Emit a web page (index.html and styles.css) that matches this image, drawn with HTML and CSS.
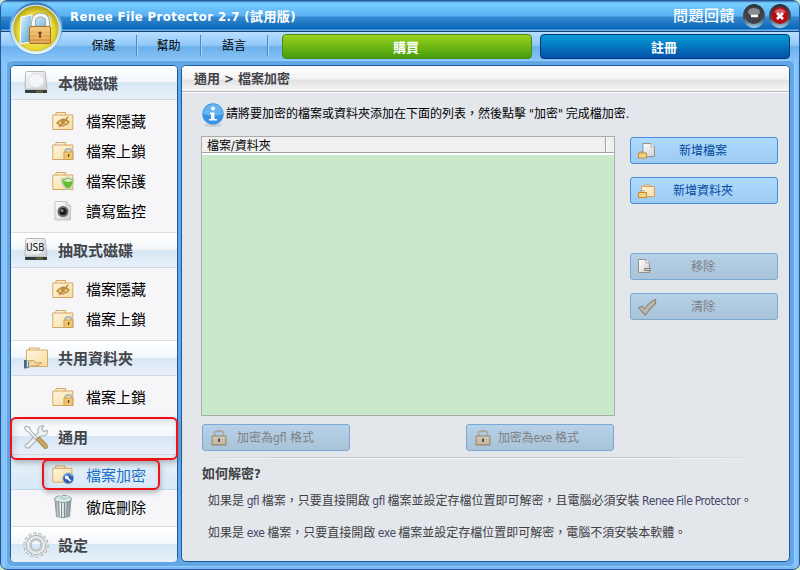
FILE: index.html
```html
<!DOCTYPE html>
<html lang="zh-Hant">
<head>
<meta charset="utf-8">
<title>Renee File Protector</title>
<link rel="stylesheet" href="styles.css">
</head>
<body>
<svg class="defs" width="0" height="0" aria-hidden="true">
  <defs>
    <linearGradient id="cream" x1="0" y1="0" x2="1" y2="1"><stop offset="0" stop-color="#fff8e4"/><stop offset="1" stop-color="#f8dd9d"/></linearGradient>
    <linearGradient id="gold" x1="0" y1="0" x2="0" y2="1"><stop offset="0" stop-color="#f7ce7c"/><stop offset="1" stop-color="#d18a35"/></linearGradient>
    <linearGradient id="paper" x1="0" y1="0" x2="1" y2="1"><stop offset="0" stop-color="#fff"/><stop offset="1" stop-color="#cfcfd1"/></linearGradient>
    <linearGradient id="steel" x1="0" y1="0" x2="1" y2="0"><stop offset="0" stop-color="#8b999e"/><stop offset=".35" stop-color="#f4f8f8"/><stop offset=".7" stop-color="#b9c5c8"/><stop offset="1" stop-color="#7c898d"/></linearGradient>
    <linearGradient id="tan" x1="0" y1="0" x2="0" y2="1"><stop offset="0" stop-color="#d3cdbb"/><stop offset="1" stop-color="#b1a283"/></linearGradient>
    <symbol id="folder" viewBox="0 0 22 20"><path d="M4 4V1.500h9.500V4M.8 4h20v14.500H.8z" fill="url(#cream)" stroke="#d6a566"/></symbol>
    <symbol id="hidden" viewBox="0 0 22 20"><use href="#folder" width="22" height="20"/><path d="M5 12q6-7 12-1q-6 7-12 1z" fill="#ecd18c" stroke="#b98b3f" stroke-width="1.500"/><circle cx="11" cy="11" r="2" fill="#b98b3f"/><path d="M7 16l9-10" stroke="#b98b3f" stroke-width="1.500"/></symbol>
    <symbol id="locked" viewBox="0 0 22 20"><use href="#folder" width="22" height="20"/><path d="M13.500 11V9.500q0-1.500 3-1.500t3 1.500V11" fill="none" stroke="#b5b5b5" stroke-width="2"/><path d="M12 11h9v7.500h-9z" fill="#efc775" stroke="#cf9d4f"/><path d="M16.500 13v3" stroke="#775025" stroke-width="1.500"/></symbol>
    <symbol id="shield" viewBox="0 0 22 20"><use href="#folder" width="22" height="20"/><path d="M9.500 8q4 0 6.500-2q2 2 5.500 2q.5 7-5.500 10.500q-6-3-6.500-10.500z" fill="#62bd29" stroke="#c4d0c1" stroke-width="1.500"/><path d="M11 9.500q5 2.500 10 0q-4-1-5-2q-2 2-5 2z" fill="#dcf3c5"/></symbol>
    <symbol id="monitor" viewBox="0 0 20 22"><path d="M2 1.500h11.500l4 4v14.500H2z" fill="url(#paper)" stroke="#c3c5c9"/><path d="M13.500 1.500v4h4" fill="#e6e6e6" stroke="#c3c5c9"/><circle cx="10" cy="11.500" r="5.500" fill="#696969"/><circle cx="10" cy="11.500" r="3.500" fill="#181818"/><circle cx="9" cy="10.500" r="1.500" fill="#909090"/></symbol>
    <symbol id="disk" viewBox="0 0 24 26"><path d="M3 1.500h17q1 0 1.300 1L23 19H1L1.700 2.500Q2 1.500 3 1.500z" fill="url(#paper)" stroke="#b5b9bd"/><path d="M1 19.500h22v3.500H2q-1 0-1-1z" fill="#343b3d"/><path d="M1 19h22" stroke="#d5dada" stroke-width="1.500"/><ellipse cx="12" cy="10.500" rx="8" ry="7" fill="#f3f5f6" stroke="#d9dee1"/><path d="M12 21.500h7" stroke="#6d6433" stroke-width="2"/></symbol>
    <symbol id="share" viewBox="0 0 26 24"><path d="M6 4V2h10v2M3.500 4h21v16.500h-21z" fill="url(#cream)" stroke="#daa967"/><path d="M5 15q5-2 9 2l5-.5q-3 4-10 3.500l-4 1z" fill="#f8d4a2" stroke="#cb9962"/><path d="M1 14h3l2 2v6l-5 .5z" fill="#436979"/><path d="M4.500 14.500v7" stroke="#d6e0e2" stroke-width="1.500"/></symbol>
    <symbol id="tools" viewBox="0 0 24 24"><path d="M3.500 18.500L14 8q-1-4 2-6l3-.5-1.500 3.500 1.500 2 3.500-1q.5 5.500-6 5L6 21.500q-2 1.500-3.500 0t1-3z" fill="#f0f3f5" stroke="#a6b0b7"/><path d="M3 2l3 1 1 3 6.500 7-1.500 1.500L5 7.500 2.500 6 1.500 3.500z" fill="#fff" stroke="#a6b0b7"/><path d="M12.500 14.500l2.500-2.500 7 7q1.500 4-2 3.500z" fill="#cba766" stroke="#a98c58"/></symbol>
    <symbol id="encrypt" viewBox="0 0 23 22"><use href="#folder" width="22" height="20"/><circle cx="17" cy="14.500" r="5.700" fill="#2d5fb0" stroke="#9fb2ce"/><path d="M13 12q4-5 8 0" fill="none" stroke="#79a6dc" stroke-width="1.500"/><circle cx="15.500" cy="13.500" r="2" fill="#fff"/><path d="M16 14l3.500 3.500" stroke="#fff" stroke-width="1.800"/></symbol>
    <symbol id="trash" viewBox="0 0 20 25"><path d="M2 5l1.500 17.500q6.500 2.500 13 0L18 5z" fill="url(#steel)" stroke="#8b999d"/><path d="M5.500 8l.8 14M8.500 9v14M11.500 9v14M14.500 8l-.8 14" stroke="#7c8d92"/><ellipse cx="10" cy="5" rx="8.500" ry="3.500" fill="#dae5e6" stroke="#8a9d9c"/><path d="M4 4l4-3 3 2 4-1 1 3-5 2z" fill="#b5d8d2" stroke="#e4f2f2"/></symbol>
    <symbol id="gear" viewBox="0 0 26 26"><circle cx="13" cy="13" r="10.900" fill="none" stroke="#9ca3a8" stroke-width="3.400" pathLength="140" stroke-dasharray="6 4"/><circle cx="13" cy="13" r="10.600" fill="none" stroke="#eceeef" stroke-width="2.600" pathLength="140" stroke-dasharray="4 6" stroke-dashoffset="-1"/><circle cx="13" cy="13" r="7.200" fill="none" stroke="#9ca3a8" stroke-width="5.500"/><circle cx="13" cy="13" r="7.200" fill="none" stroke="#e6e8ea" stroke-width="4.300"/><circle cx="13" cy="13" r="6" fill="none" stroke="#bfc4c8" stroke-width="1.500"/></symbol>
    <symbol id="addfile" viewBox="0 0 20 18"><path d="M6 1.500h8l3.500 3.500v9.500H6z" fill="url(#paper)" stroke="#949494"/><path d="M14 1.500V5h3.500" fill="#fff" stroke="#aaa"/><path d="M3 11V9.500h4V11" fill="none" stroke="#aaa"/><path d="M1.500 11h8v5h-8z" fill="#f4d184" stroke="#c88a31"/></symbol>
    <symbol id="addfolder" viewBox="0 0 20 18"><path d="M7 4.500V3h6v1.500M4.500 4.500h13v10h-13z" fill="url(#cream)" stroke="#d5a35b"/><path d="M3 10V8.500h4V10" fill="none" stroke="#aaa"/><path d="M1.500 10.500h8v5h-8z" fill="#f4d184" stroke="#c88a31"/></symbol>
    <symbol id="remove" viewBox="0 0 20 18"><path d="M1.500 1.500h7.500l3.500 3.500v9.500h-11z" fill="url(#paper)" stroke="#929292"/><path d="M9 1.500V5h3.500" fill="#fff" stroke="#aaa"/><path d="M7.500 10.500h6v2h-6z" fill="#d6cdbc" stroke="#8b806f"/></symbol>
    <symbol id="check" viewBox="0 0 20 18"><path d="M1.500 10l4-2 2 3q5-7 11-9.500v4q-5 4-10 11.500z" fill="#bdb8aa" stroke="#8e8a7c" stroke-width="1.200"/></symbol>
    <symbol id="padlock" viewBox="0 0 16 18"><path d="M3.500 8V4q0-2 4.500-2t4.500 2v4" fill="none" stroke="#aaa9a4" stroke-width="2"/><path d="M1 7h14v9H1z" fill="url(#tan)" stroke="#94866c"/><path d="M2 9.500h12M2 12h12M2 14h12" stroke="#d4c9b0"/><path d="M8 9.500v3.500" stroke="#555" stroke-width="2"/></symbol>
  </defs>
</svg>
<div class="window">
  <header class="titlebar"><h1>Renee File Protector 2.7 (試用版)</h1><span class="feedback">問題回饋</span>
    <svg class="winbtn" viewBox="0 0 22 24"><defs><linearGradient id="wg" x1="0" y1="0" x2="0" y2="1"><stop offset="0" stop-color="#29303a"/><stop offset=".6" stop-color="#46515d"/><stop offset="1" stop-color="#9bd5f5"/></linearGradient></defs><ellipse cx="11" cy="12" rx="11" ry="12" fill="url(#wg)"/><circle cx="11" cy="11.500" r="8.500" fill="#3f4246"/><ellipse cx="11" cy="8" rx="6" ry="4" fill="#888c90"/><path d="M8 12h7" stroke="#fff" stroke-width="2.500"/></svg>
    <svg class="winbtn" viewBox="0 0 22 24"><ellipse cx="11" cy="12" rx="11" ry="12" fill="url(#wg)"/><circle cx="11" cy="11.500" r="8.500" fill="#b30e13"/><path d="M5 8q6-7 12 0q-5 3-12 0z" fill="#d45f62"/><path d="M8 9l6 6m0-6l-6 6" stroke="#fff" stroke-width="2.600"/></svg>
  </header>
  <svg class="logo" viewBox="0 0 54 54"><defs><radialGradient id="lg" cx=".5" cy=".55" r=".55"><stop offset="0" stop-color="#fffbb0"/><stop offset=".7" stop-color="#e9d935"/><stop offset="1" stop-color="#a39415"/></radialGradient><linearGradient id="ring" x1="0" y1="0" x2="0" y2="1"><stop offset="0" stop-color="#2267aa"/><stop offset=".45" stop-color="#a1cdf2"/><stop offset="1" stop-color="#fff"/></linearGradient><linearGradient id="blue" x1="0" y1="0" x2="1" y2="1"><stop offset="0" stop-color="#e7f7fd"/><stop offset="1" stop-color="#489ccd"/></linearGradient></defs><circle cx="27" cy="26.500" r="26" fill="url(#ring)" stroke="#6da8df"/><circle cx="27" cy="26.500" r="23.300" fill="url(#lg)" stroke="#d3e8ec" stroke-width="1.300"/><path d="M20 15h21v19H17z" fill="url(#blue)" stroke="#d3eef7"/><path d="M12 15l11-2-2 27-10 2z" fill="url(#blue)" stroke="#fff"/><path d="M24.500 26v-6q0-7 7-7t7 7v6" fill="none" stroke="#969da1" stroke-width="4.500"/><path d="M24.500 26v-6q0-7 7-7t7 7v6" fill="none" stroke="#f4f6f6" stroke-width="3"/><rect x="20.500" y="24.500" width="21" height="17" rx="1.500" fill="url(#gold)" stroke="#a76b2b"/><path d="M21 28h20M21 32h20M21 36h20M21 40h20" stroke="#f4c785"/><circle cx="31" cy="31" r="1.600" fill="#623d1c"/><path d="M31 31v5" stroke="#623d1c" stroke-width="1.500"/></svg>
  <nav class="menubar"><span>保護</span><span>幫助</span><span>語言</span><button class="buy">購買</button><button class="register">註冊</button></nav>
  <main class="workspace">
    <aside class="sidebar">
      <h2 class="first"><svg class="hi"><use href="#disk"/></svg>本機磁碟</h2>
      <ul><li><svg><use href="#hidden"/></svg>檔案隱藏</li><li><svg><use href="#locked"/></svg>檔案上鎖</li><li><svg><use href="#shield"/></svg>檔案保護</li><li><svg><use href="#monitor"/></svg>讀寫監控</li></ul>
      <h2><span class="usb"><svg class="hi"><use href="#disk"/></svg><b>USB</b></span>抽取式磁碟</h2>
      <ul><li><svg><use href="#hidden"/></svg>檔案隱藏</li><li><svg><use href="#locked"/></svg>檔案上鎖</li></ul>
      <h2><svg class="hi"><use href="#share"/></svg>共用資料夾</h2>
      <ul class="single"><li><svg><use href="#locked"/></svg>檔案上鎖</li></ul>
      <h2 class="general"><svg class="hi"><use href="#tools"/></svg>通用</h2>
      <div class="selected"><svg><use href="#encrypt"/></svg>檔案加密</div>
      <div class="shred"><svg><use href="#trash"/></svg>徹底刪除</div>
      <h2 class="last"><svg class="hi"><use href="#gear"/></svg>設定</h2>
      <i class="mark large"></i><i class="mark small"></i>
    </aside>
    <section class="content">
      <h2 class="crumb">通用 &gt; 檔案加密</h2>
      <p class="hint"><svg viewBox="0 0 24 26"><ellipse cx="12" cy="23" rx="9" ry="2" fill="#cbd0d6"/><circle cx="12" cy="12" r="10.700" fill="#3991e4"/><path d="M2 12a10 10 0 0 1 20 0q-10 3-20 0z" fill="#65b4f1"/><circle cx="12" cy="6.500" r="2" fill="#fff"/><path d="M9 10.500h4.500V17H16v1.500H8V17h2v-5H9z" fill="#fff"/></svg><span>請將要加密的檔案或資料夾添加在下面的列表，然後點擊 "加密" 完成檔加密.</span></p>
      <div class="editor">
        <div class="list"><div class="listhead"><span>檔案/資料夾</span><i></i></div></div>
        <div class="actions"><button><svg><use href="#addfile"/></svg><span>新增檔案</span></button><button><svg><use href="#addfolder"/></svg><span>新增資料夾</span></button><button class="off gap"><svg><use href="#remove"/></svg><span>移除</span></button><button class="off"><svg><use href="#check"/></svg><span>清除</span></button></div>
      </div>
      <div class="formats"><button class="off"><svg><use href="#padlock"/></svg><span>加密為gfl 格式</span></button><button class="off exe"><svg><use href="#padlock"/></svg><span>加密為exe 格式</span></button></div>
      <div class="rule"></div>
      <h3>如何解密?</h3>
      <p class="note">如果是 <em>gfl</em> 檔案，只要直接開啟 <em>gfl</em> 檔案並設定存檔位置即可解密，且電腦必須安裝 <em>Renee File Protector</em>。</p>
      <p class="note exe">如果是 <em>exe</em> 檔案，只要直接開啟 <em>exe</em> 檔案並設定存檔位置即可解密，電腦不須安裝本軟體。</p>
    </section>
  </main>
</div>
</body>
</html>
```
FILE: styles.css
```css
* { box-sizing: border-box; }
body { margin: 0; background: #c9e9cd; font: 12px/16px "DejaVu Sans Condensed", "Noto Sans CJK TC", sans-serif; color: #000; }
h1, h2, h3, p, ul { margin: 0; padding: 0; list-style: none; }
.defs { position: absolute; }
.window { position: relative; width: 800px; height: 570px; overflow: hidden; border: 1px solid #24579b; border-radius: 7px; background: linear-gradient(90deg, #7dbdf5 0, #8cc8fa 3px, #78b8f2 6px, #78b8f2 791px, #8cc8fa 795px, #7dbdf5 797px); }
.titlebar { height: 31px; display: flex; align-items: center; padding: 0 8px 0 69px; border-bottom: 1px solid #173f70; background: linear-gradient(#3b78b6 0, #78cfff 2px, #58b0f3 15px, #368bd2 16px, #0865b5 28px, #6bb5ef 29px, #6bb5ef 30px); color: #fff; }
.titlebar h1 { flex: 1; font: bold 13px/20px "DejaVu Sans Condensed", "Noto Sans CJK TC", sans-serif; letter-spacing: .4px; padding-top: 2px; white-space: nowrap; }
.feedback { font-size: 15px; font-weight: 500; margin-right: 8px; letter-spacing: .5px; }
.winbtn { width: 22px; height: 24px; margin-right: 4px; }
.winbtn:last-child { margin-right: 0; }
.logo { position: absolute; left: 8px; top: 1px; width: 54px; height: 54px; }
.menubar { height: 28px; display: flex; padding: 2px 9px 0 70px; background: linear-gradient(#b8ddff, #92c9fa 13px, #6cb0ec 15px, #87c3f8); }
.menubar span { width: 66px; height: 21px; margin-top: 1px; border-right: 1px solid #4b8ac9; box-shadow: 1px 0 #a7d6ff; text-align: center; line-height: 22px; }
.menubar span:nth-child(2) { width: 64px; }
.menubar span:nth-child(3) { width: 67px; }
.menubar button { width: 250px; height: 25px; padding: 0 2px 0 0; font: bold 13px/20px "Noto Sans CJK TC", sans-serif; color: #fff; border-radius: 4px; }
.buy { margin-left: 14px; border: 1px solid #4c891b; background: linear-gradient(#9ad31e, #459c0c); }
.register { margin-left: 8px; border: 1px solid #07366f; background: linear-gradient(#059dd5, #0350a8); }
.workspace { height: 507px; margin: 0 4px 0 5px; border-radius: 6px; border: 1px solid #93ccff; background: #64a5e5; display: flex; gap: 3px; padding: 5px 3px 3px; }
.sidebar, .content { height: 497px; border: 1px solid #175d9e; border-radius: 5px; overflow: hidden; }
.workspace { padding: 4px 3px 4px 3px; }
.sidebar { position: relative; flex: 0 0 168px; background: #f6f6f9; overflow: visible; font-size: 15px; }
.sidebar h2 { height: 36px; display: flex; align-items: center; border-top: 1px solid #dadce0; border-bottom: 1px solid #d3d9df; font: bold 15px/20px "Noto Sans CJK TC", sans-serif; color: #434549; background: linear-gradient(#fff 0, #f3f7fb 48%, #d6e6f4 50%, #e9f1fa 100%); }
.sidebar h2.first { height: 34px; border-top: 0; border-radius: 4px 4px 0 0; }
.hi { width: 26px; height: 26px; margin: 0 9px 0 12px; }
.sidebar ul { height: 132px; padding-top: 6px; }
.sidebar h2:not(.first) + ul { height: 72px; }
.sidebar h2:not(.first) + ul.single { height: 42px; }
.sidebar li, .selected, .shred { display: flex; align-items: center; height: 30px; padding-left: 41px; font: 15px/20px "Noto Sans CJK TC", sans-serif; }
.sidebar li svg, .selected svg, .shred svg { width: 22px; height: 22px; margin-right: 12px; }
.sidebar h2.general { height: 37px; }
.sidebar .selected { height: 35px; padding-top: 5px; color: #1b70c8; background: linear-gradient(#e8f0f8, #d9e9f7); border-bottom: 1px solid #bfd7eb; }
.sidebar .shred { height: 36px; padding-bottom: 3px; }
.shred svg { height: 25px; }
.sidebar h2.last { height: 36px; border-bottom: 0; border-radius: 0 0 4px 4px; }
.usb { position: relative; display: flex; }
.usb b { position: absolute; left: 15px; top: 6px; font: 10px/10px "DejaVu Sans Condensed", sans-serif; color: #111; }
.mark { position: absolute; border: 2px solid #ee1117; border-radius: 6px; box-shadow: 1px 3px 5px rgba(70, 80, 90, .35), inset 2px 3px 6px rgba(70, 80, 90, .22); }
.large { left: -1px; top: 351px; width: 168px; height: 43px; }
.small { left: 31px; top: 393px; width: 118px; height: 31px; }
.content { flex: 0 0 609px; background: #e3e6eb; }
.crumb { height: 27px; padding: 4px 0 0 12px; border-bottom: 1px solid #fff; box-shadow: inset 0 -1px #b8b9bb; background: linear-gradient(#fff, #f2f2f2 13px, #e2e2e2 14px, #f7f7f7); color: #434549; font: bold 13px/18px "DejaVu Sans Condensed", "Noto Sans CJK TC", sans-serif; }
.hint { display: flex; height: 43px; padding: 9px 0 0 19px; line-height: 24px; white-space: nowrap; word-spacing: -.5px; }
.hint svg { width: 24px; height: 26px; margin-right: 1px; }
.editor { display: flex; padding-left: 19px; gap: 15px; height: 280px; }
.list { width: 414px; height: 280px; border: 1px solid #acacac; background: #c9e9cd; }
.listhead { height: 18px; padding-left: 5px; display: flex; justify-content: space-between; background: #f0f0f0; border-bottom: 2px solid #fff; box-shadow: inset 0 -1px #a0a0a0; line-height: 18px; }
.listhead i { width: 9px; height: 15px; border-left: 1px solid #a0a0a0; box-shadow: inset 1px 0 #fff; }
.actions { display: flex; flex-direction: column; gap: 13px; padding-top: 1px; }
.content button { width: 148px; height: 27px; padding: 1px 0 0; display: flex; align-items: center; border: 1px solid #458cd8; border-radius: 3px; background: linear-gradient(#afdaff, #9dcaf0); color: #0048a0; font: 12px/20px "DejaVu Sans Condensed", "Noto Sans CJK TC", sans-serif; white-space: nowrap; }
.actions button svg { width: 20px; height: 18px; margin-left: 6px; }
.actions button span { flex: 1; text-align: center; padding-right: 28px; }
.content button.off { border-color: #7aa9d6; background: linear-gradient(#b6d1e8, #a9c3d8); color: #7e8083; }
.content .gap { margin-top: 36px; }
.formats { display: flex; gap: 116px; padding: 8px 0 0 20px; height: 41px; }
.formats svg { width: 16px; height: 18px; margin: 0 10px 0 8px; }
.formats .exe svg { margin-right: 7px; }
.formats .exe span { letter-spacing: -.2px; }
.rule { height: 2px; border-top: 1px solid #c2c5c9; border-bottom: 1px solid #fafafa; -webkit-mask-image: linear-gradient(90deg, transparent, #000 20%, #000 75%, transparent 98%); mask-image: linear-gradient(90deg, transparent, #000 20%, #000 75%, transparent 98%); }
h3 { padding: 6px 0 0 20px; height: 32px; color: #404144; font: bold 13px/18px "DejaVu Sans Condensed", "Noto Sans CJK TC", sans-serif; }
.note { height: 32px; padding-left: 26px; line-height: 20px; color: #404144; white-space: nowrap; word-spacing: -.8px; }
.note em { font-style: normal; color: #45476c; letter-spacing: -.4px; }
```
